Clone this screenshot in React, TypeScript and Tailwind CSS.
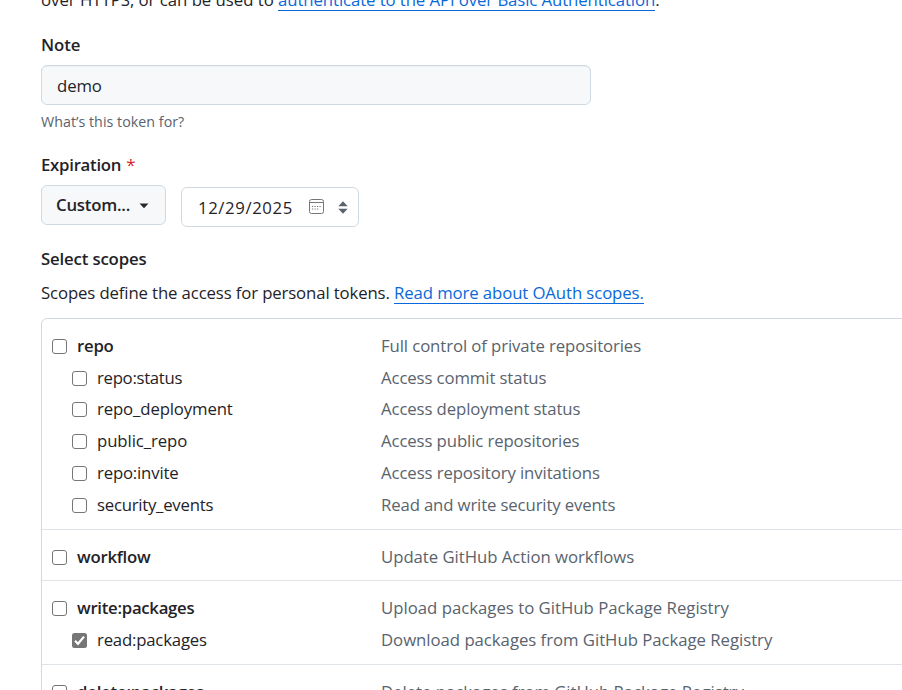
type Scope = { name: string; nameLs: string; desc: string; descLs: string; checked?: boolean };
type Group = { height: string; items: Scope[] };

const groups: Group[] = [
  {
    height: "h-[211px]",
    items: [
      { name: "repo", nameLs: "tracking-[-0.25px]", desc: "Full control of private repositories", descLs: "tracking-[-0.1px]" },
      { name: "repo:status", nameLs: "tracking-[-0.3px]", desc: "Access commit status", descLs: "tracking-[-0.11px]" },
      { name: "repo_deployment", nameLs: "tracking-[-0.13px]", desc: "Access deployment status", descLs: "tracking-[-0.11px]" },
      { name: "public_repo", nameLs: "tracking-[-0.09px]", desc: "Access public repositories", descLs: "tracking-[-0.11px]" },
      { name: "repo:invite", nameLs: "tracking-[-0.18px]", desc: "Access repository invitations", descLs: "tracking-[-0.1px]" },
      { name: "security_events", nameLs: "tracking-[-0.25px]", desc: "Read and write security events", descLs: "tracking-[-0.14px]" },
    ],
  },
  {
    height: "h-[51px]",
    items: [{ name: "workflow", nameLs: "tracking-[-0.24px]", desc: "Update GitHub Action workflows", descLs: "tracking-[-0.04px]" }],
  },
  {
    height: "h-[84px]",
    items: [
      { name: "write:packages", nameLs: "tracking-[-0.28px]", desc: "Upload packages to GitHub Package Registry", descLs: "tracking-[0px]" },
      { name: "read:packages", nameLs: "tracking-[-0.2px]", desc: "Download packages from GitHub Package Registry", descLs: "tracking-[-0.035px]", checked: true },
    ],
  },
  {
    height: "h-[84px]",
    items: [{ name: "delete:packages", nameLs: "tracking-[-0.21px]", desc: "Delete packages from GitHub Package Registry", descLs: "tracking-[-0.03px]" }],
  },
];

function Checkbox({ checked }: { checked?: boolean }) {
  return checked ? (
    <span className="flex size-[15px] shrink-0 items-center justify-center rounded-[2.5px] bg-[#767676]">
      <svg viewBox="0 0 15 15" className="size-[15px]" fill="none" stroke="#fff" strokeWidth="2.2">
        <path d="M3 7.8 6 10.8 12 3.6" />
      </svg>
    </span>
  ) : (
    <span className="size-[15px] shrink-0 rounded-[3px] border-[1.25px] border-[#767676] bg-white" />
  );
}

function ScopeRow({ scope, child }: { scope: Scope; child: boolean }) {
  return (
    <div className="flex h-[31.75px] items-center">
      <div className={child ? "flex w-[339px] items-center gap-[10px] pl-[30px]" : "flex w-[339px] items-center gap-[10px] pl-[10px]"}>
        <Checkbox checked={scope.checked} />
        <span className={`${scope.nameLs} ${child ? "" : "font-semibold"} relative -top-[0.5px]`}>{scope.name}</span>
      </div>
      <span className={`${scope.descLs} relative -top-[0.5px] whitespace-nowrap text-[#59636e]`}>{scope.desc}</span>
    </div>
  );
}

export default function App() {
  return (
    <div className="h-[690px] w-[902px] overflow-hidden bg-white pl-[41px] font-['Open_Sans','Noto_Sans',sans-serif] text-[16.75px] leading-[26px] text-[#1f2328]">
      <p className="-mt-[13px] h-[26px] whitespace-nowrap">
        <span className="tracking-[-0.02px]">over HTTPS, or can be used to </span>
        <a className="inline-block h-[24px] border-b border-[#0969da] tracking-[-0.09px] text-[#0969da]">authenticate to the API over Basic Authentication</a>.
      </p>

      <label className="mt-[19px] block h-[26px] font-semibold tracking-[-0.1px]">Note</label>
      <div className="mt-[7px] flex h-10 w-[550px] items-center rounded-md border border-[#d1d9e0] bg-[#f6f8fa] pl-[15px] pt-[2px] shadow-[inset_0_1px_0_rgba(31,35,40,0.04)]">
        <span className="tracking-[-0.1px]">demo</span>
      </div>
      <p className="mt-1.5 h-[22px] text-[14.25px] leading-[22px] tracking-[0.03px] text-[#59636e]">What’s this token for?</p>

      <label className="mt-[19px] block h-[26px] font-semibold tracking-[-0.26px]">
        Expiration <span className="ml-[1px] font-normal text-[#d1242f]">*</span>
      </label>
      <div className="mt-[7px] flex h-[42px] items-start gap-[15px]">
        <button className="flex h-10 w-[125px] items-center rounded-md border border-[#d1d9e0] bg-[#f6f8fa] pl-[14px] font-semibold">
          <span className="tracking-[-0.22px]">Custom...</span>
          <svg viewBox="0 0 10 6" className="ml-[9px] mt-px h-[6px] w-[10px]" fill="#25292e">
            <path d="M0.5 0.5h9L5 5.3z" />
          </svg>
        </button>
        <div className="mt-[2px] flex h-10 w-[178px] items-center rounded-md border border-[#d1d9e0] bg-white pl-4">
          <span className="mt-[2px] w-[111px] tracking-[0.6px]">12/29/2025</span>
          <svg viewBox="0 0 15 15" className="-mt-[1px] size-[15px]" fill="none" stroke="#767676">
            <rect x="0.5" y="0.5" width="14" height="14" rx="2" />
            <path d="M0.5 3.5h14" />
            <path d="M5.5 7.5h1.2M8 7.5h1.2M10.5 7.5h1.2M3 10h1.2M5.5 10h1.2M8 10h1.2M3 7.5h1.2" strokeWidth="1.2" />
          </svg>
          <svg viewBox="0 0 10 13" className="ml-[14px] h-[13px] w-[10px]" fill="#59636e">
            <path d="M5 0.3 9.7 5.3H0.3zM0.3 7.7h9.4L5 12.7z" />
          </svg>
        </div>
      </div>

      <h2 className="mt-[19px] h-[26px] font-semibold tracking-[-0.15px]">Select scopes</h2>
      <p className="mt-2 h-[26px] whitespace-nowrap">
        <span className="tracking-[-0.126px]">Scopes define the access for personal tokens. </span>
        <a className="inline-block h-[24px] border-b border-[#0969da] tracking-[-0.1px] text-[#0969da]">Read more about OAuth scopes.</a>
      </p>

      <div className="mt-3 w-[950px] rounded-md border border-[#d1d9e0]">
        {groups.map((g) => (
          <div key={g.items[0].name} className={`${g.height} border-b border-[#dfe4e8] pt-[11.6px]`}>
            {g.items.map((s, i) => (
              <ScopeRow key={s.name} scope={s} child={i > 0} />
            ))}
          </div>
        ))}
      </div>
    </div>
  );
}
